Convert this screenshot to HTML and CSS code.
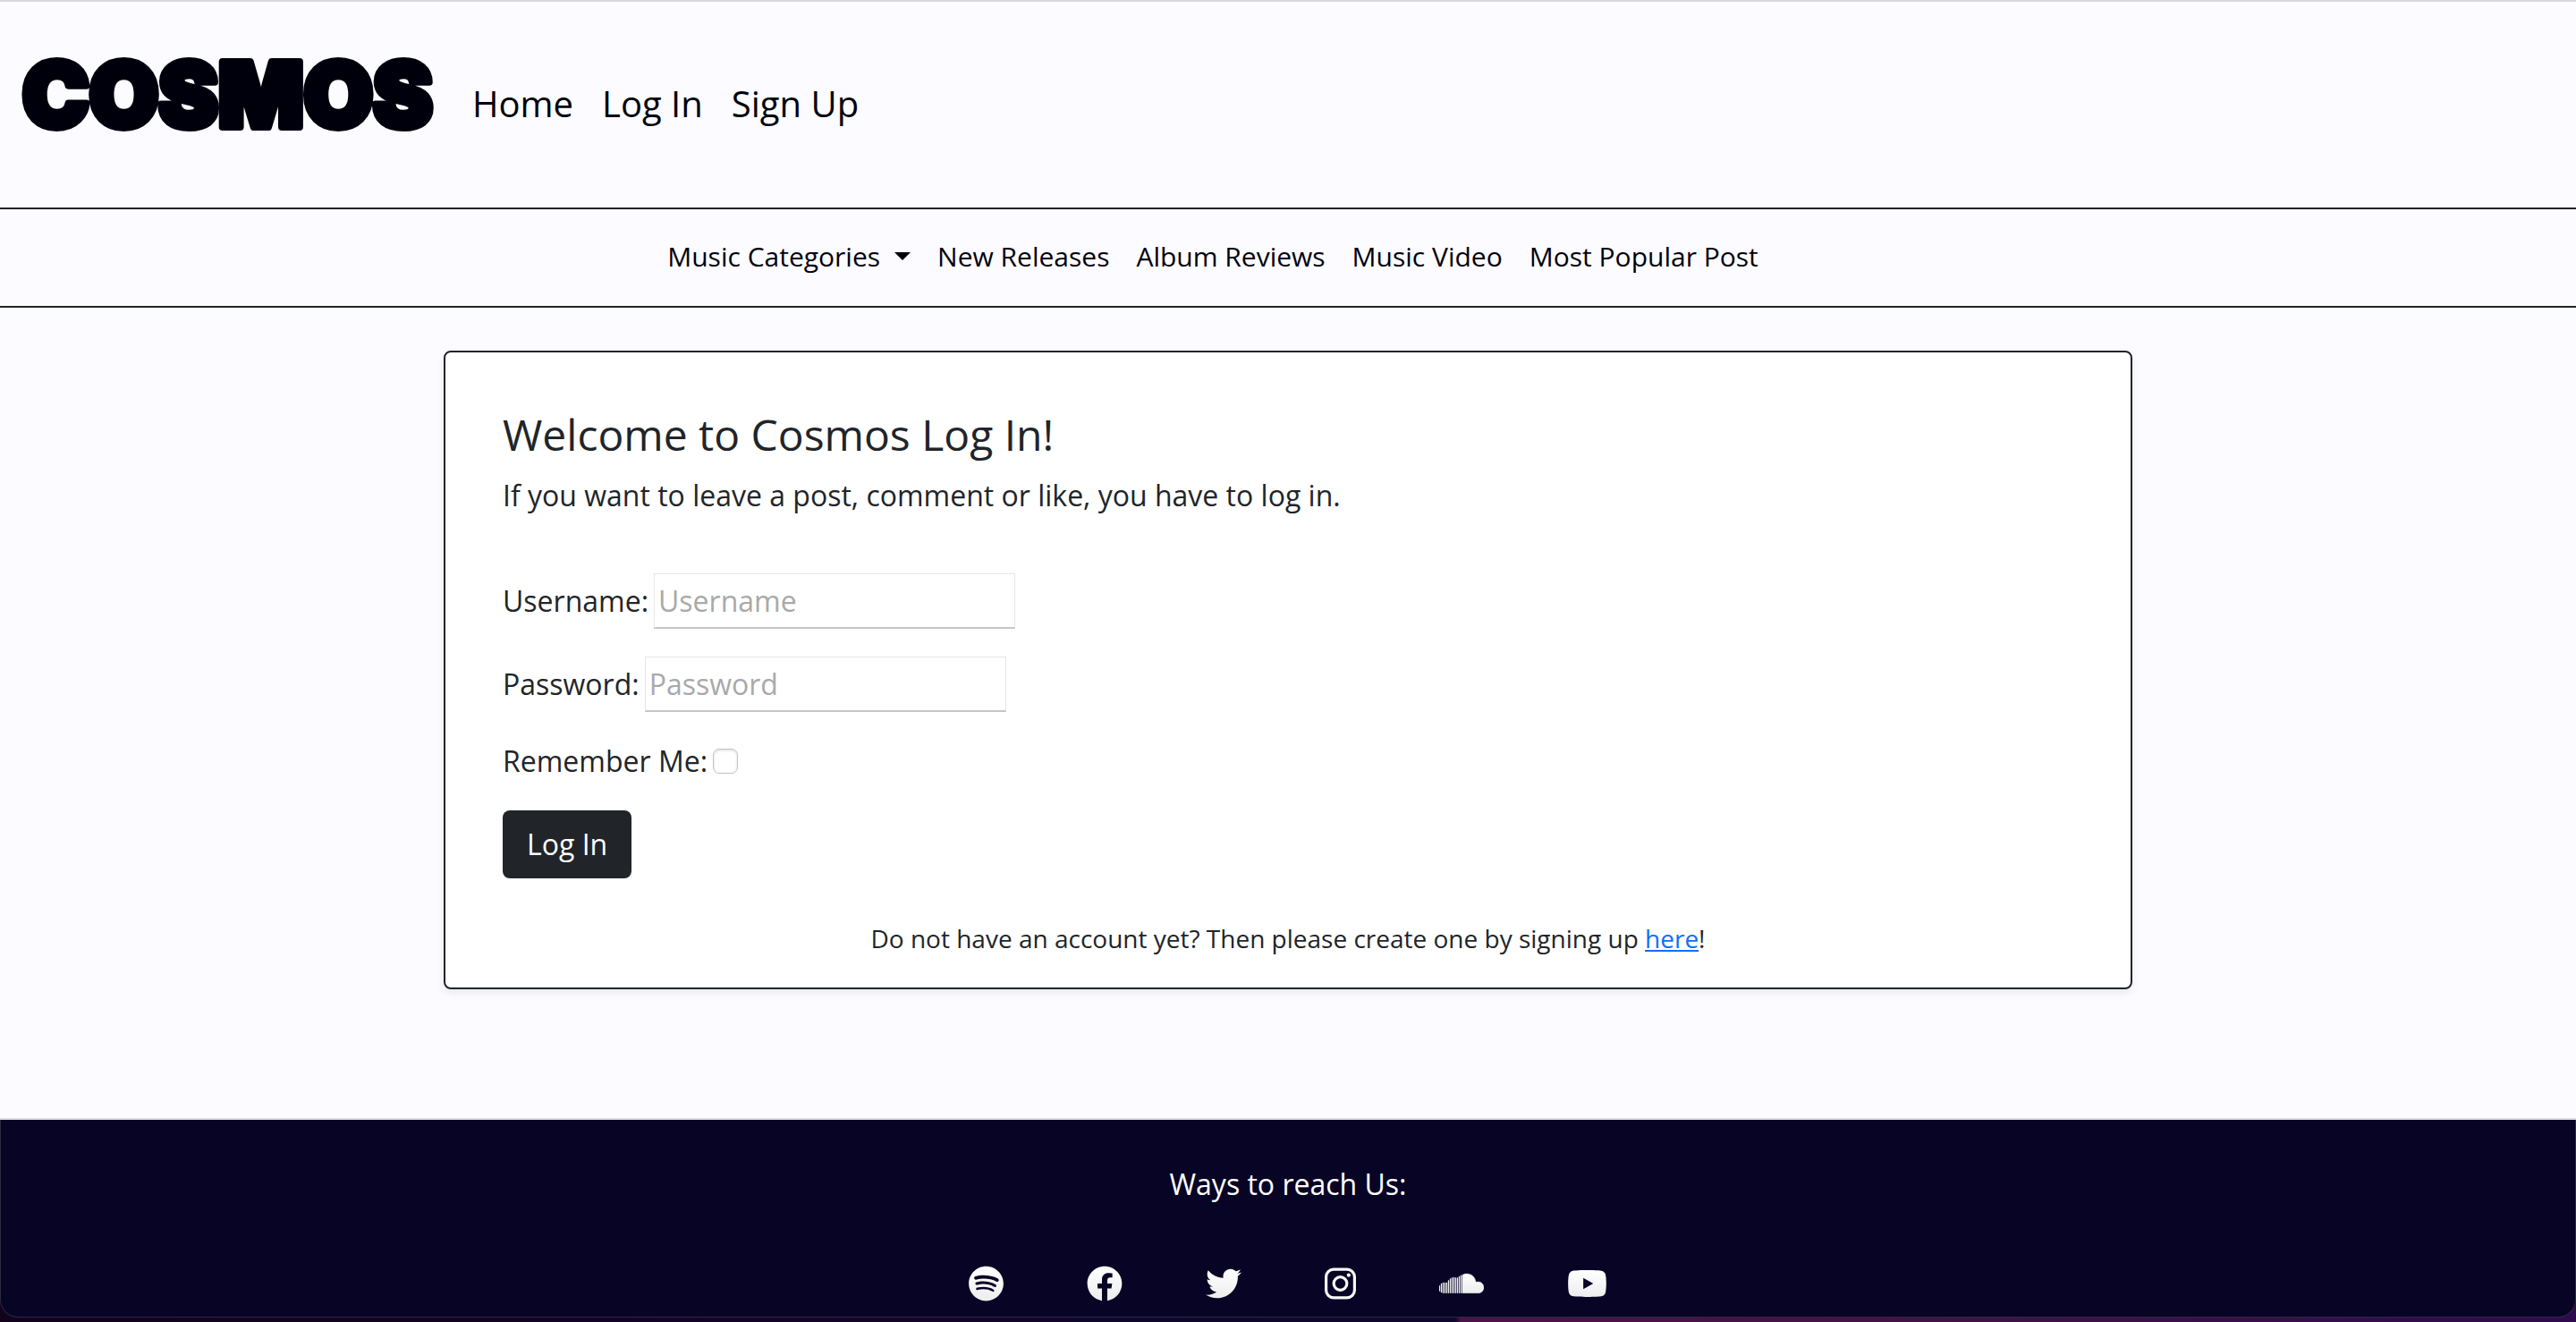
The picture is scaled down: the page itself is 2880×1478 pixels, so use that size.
FILE: index.html
```html
<!DOCTYPE html>
<html lang="en">
<head>
<meta charset="utf-8">
<meta name="viewport" content="width=device-width, initial-scale=1">
<title>Cosmos</title>
<link rel="stylesheet" href="styles.css">
</head>
<body>
<header class="site-header">
  <a class="brand" href="#" aria-label="Cosmos home">
    <svg class="brand-logo" viewBox="0 0 460 116" width="460" height="116">
      <text class="brand-text" x="1" y="86">COSMOS</text>
    </svg>
  </a>
  <nav class="main-nav">
    <a href="#">Home</a>
    <a href="#">Log In</a>
    <a href="#">Sign Up</a>
  </nav>
</header>

<nav class="category-nav">
  <button class="dropdown-toggle" type="button">Music Categories</button>
  <a href="#">New Releases</a>
  <a href="#">Album Reviews</a>
  <a href="#">Music Video</a>
  <a href="#">Most Popular Post</a>
</nav>

<main class="content">
  <section class="card">
    <h1 class="card-title">Welcome to Cosmos Log In!</h1>
    <p class="card-lead">If you want to leave a post, comment or like, you have to log in.</p>
    <form class="login-form">
      <div class="field">
        <label for="username">Username:</label>
        <input class="text-input" id="username" type="text" placeholder="Username">
      </div>
      <div class="field">
        <label for="password">Password:</label>
        <input class="text-input" id="password" type="password" placeholder="Password">
      </div>
      <div class="field">
        <label for="remember">Remember Me:</label>
        <input class="check-input" id="remember" type="checkbox">
      </div>
      <button class="submit" type="submit">Log In</button>
    </form>
    <p class="signup-note">Do not have an account yet? Then please create one by signing up <a href="#">here</a>!</p>
  </section>
</main>

<div class="footer-wrap">
  <footer class="site-footer">
    <p class="footer-title">Ways to reach Us:</p>
    <div class="social">
      <a href="#" aria-label="Spotify">
        <svg viewBox="0 0 496 512" width="39" height="40">
          <defs><linearGradient id="shade" x1="0" y1="0" x2="0" y2="1"><stop offset="0" stop-color="#fff"/><stop offset="1" stop-color="#ededed"/></linearGradient></defs>
          <path d="M248 8C111.1 8 0 119.1 0 256s111.1 248 248 248 248-111.1 248-248S384.9 8 248 8zm100.7 364.9c-4.2 0-6.8-1.3-10.7-3.6-62.4-37.6-135-39.2-206.7-24.5-3.9 1-9 2.6-11.9 2.6-9.7 0-15.8-7.7-15.8-15.8 0-10.3 6.1-15.2 13.6-16.8 81.9-18.1 165.6-16.5 237 26.2 6.1 3.9 9.7 7.4 9.7 16.5s-7.1 15.4-15.2 15.4zm26.9-65.6c-5.2 0-8.7-2.3-12.3-4.2-62.5-37-155.7-51.9-238.6-29.4-4.8 1.3-7.4 2.6-11.9 2.6-10.7 0-19.4-8.7-19.4-19.4s5.2-17.8 15.5-20.7c27.8-7.8 56.2-13.6 97.8-13.6 64.9 0 127.6 16.1 177 45.5 8.1 4.8 11.3 11 11.3 19.7-.1 10.8-8.5 19.5-19.4 19.5zm31-76.2c-5.2 0-8.4-1.3-12.9-3.9-71.2-42.5-198.5-52.7-280.9-29.7-3.6 1-8.1 2.6-12.9 2.6-13.2 0-23.3-10.3-23.3-23.6 0-13.6 8.4-21.3 17.4-23.9 35.2-10.3 74.6-15.2 117.5-15.2 73 0 149.5 15.2 205.4 47.8 7.8 4.5 12.9 10.7 12.9 22.6 0 13.6-11 23.3-23.2 23.3z"/>
        </svg>
      </a>
      <a href="#" aria-label="Facebook">
        <svg viewBox="0 0 512 512" width="40" height="40"><path d="M504 256C504 119 393 8 256 8S8 119 8 256c0 123.78 90.69 226.38 209.25 245V327.69h-63V256h63v-54.64c0-62.15 37-96.48 93.67-96.48 27.14 0 55.52 4.84 55.52 4.84v61h-31.28c-30.8 0-40.41 19.12-40.41 38.73V256h68.78l-11 71.69h-57.78V501C413.31 482.38 504 379.78 504 256z"/></svg>
      </a>
      <a href="#" aria-label="Twitter">
        <svg viewBox="0 0 512 512" width="40" height="40"><path d="M459.37 151.716c.325 4.548.325 9.097.325 13.645 0 138.72-105.583 298.558-298.558 298.558-59.452 0-114.68-17.219-161.137-47.106 8.447.974 16.568 1.299 25.34 1.299 49.055 0 94.213-16.568 130.274-44.832-46.132-.975-84.792-31.188-98.112-72.772 6.498.974 12.995 1.624 19.818 1.624 9.421 0 18.843-1.3 27.614-3.573-48.081-9.747-84.143-51.98-84.143-102.985v-1.299c13.969 7.797 30.214 12.67 47.431 13.319-28.264-18.843-46.781-51.005-46.781-87.391 0-19.492 5.197-37.36 14.294-52.954 51.655 63.675 129.3 105.258 216.365 109.807-1.624-7.797-2.599-15.918-2.599-24.04 0-57.828 46.782-104.934 104.934-104.934 30.213 0 57.502 12.67 76.67 33.137 23.715-4.548 46.456-13.32 66.599-25.34-7.798 24.366-24.366 44.833-46.132 57.827 21.117-2.273 41.584-8.122 60.426-16.243-14.292 20.791-32.161 39.308-52.628 54.253z"/></svg>
      </a>
      <a href="#" aria-label="Instagram">
        <svg viewBox="0 0 448 512" width="35" height="40">
          <g fill="none" stroke="#f7f7f7" stroke-width="41"><rect x="20.500" y="52.500" width="407" height="407" rx="108"/><circle cx="224" cy="256" r="94"/></g>
          <circle cx="343.500" cy="136.500" r="27"/>
        </svg>
      </a>
      <a href="#" aria-label="SoundCloud">
        <svg viewBox="0 0 50 40" width="50" height="40">
          <path stroke="#f4f4f4" stroke-width=".3" d="M0 22.500h1v6H0zM2 20h1v10H2zM4 19h1v11.700H4zM6 19h1v11.700H6zM8 19h1v11.700H8zM10 16.500h1v14.200h-1zM12 14.500h1v16.200h-1zM14 13.500h1v17.200h-1zM16 13h1v17.700h-1zM18 13.500h1v17.200h-1zM20 13.500h1v17.200h-1zM22 12h1v18.700h-1zM24 10.800h1.200v19.900H24zM26 10.200C27.500 9.400 29 9 30.800 9c5.500 0 9.700 4 10.300 9.400.8-.3 1.700-.4 2.600-.4 3.500 0 6.300 2.900 6.300 6.400s-2.800 6.300-6.300 6.300H26z"/>
        </svg>
      </a>
      <a href="#" aria-label="YouTube">
        <svg viewBox="0 0 576 512" width="45" height="40"><path d="M549.655 124.083c-6.281-23.650-24.787-42.276-48.284-48.597C458.781 64 288 64 288 64S117.220 64 74.629 75.486c-23.497 6.322-42.003 24.947-48.284 48.597-11.412 42.867-11.412 132.305-11.412 132.305s0 89.438 11.412 132.305c6.281 23.650 24.787 41.500 48.284 47.821C117.220 448 288 448 288 448s170.780 0 213.371-11.486c23.497-6.321 42.003-24.171 48.284-47.821 11.412-42.867 11.412-132.305 11.412-132.305s0-89.438-11.412-132.305zm-317.510 213.508V175.185l142.739 81.205-142.739 81.201z"/></svg>
      </a>
    </div>
  </footer>
</div>
</body>
</html>
```
FILE: styles.css
```css
*, *::before, *::after { box-sizing: border-box; }

body {
  margin: 0;
  border-top: 2px solid #d8d8de;
  background: #fcfbff;
  color: #212529;
  font-family: "Open Sans", "Noto Sans", sans-serif;
  font-size: 32px;
  line-height: 48px;
}

h1, p { margin: 0; font-weight: 400; }

input, button { font: inherit; color: inherit; }

/* Header */
.site-header {
  display: flex;
  align-items: center;
  gap: 44px;
  padding: 54px 24px 60px;
  border-bottom: 2px solid #212529;
}

.brand-logo { display: block; overflow: visible; }

.brand-text {
  font-family: Inter, sans-serif;
  font-size: 100px;
  font-weight: 900;
  fill: #00000c;
  stroke: #00000c;
  stroke-width: 8px;
  stroke-linejoin: round;
}

.main-nav {
  display: flex;
  gap: 32px;
  padding-top: 4px;
  font-size: 40px;
  line-height: 60px;
}

.main-nav a,
.category-nav a,
.dropdown-toggle { color: #00000c; text-decoration: none; }

/* Category bar */
.category-nav {
  display: flex;
  justify-content: center;
  gap: 30px;
  padding: 30px 168px 33px 0;
  border-bottom: 2px solid #212529;
  font-size: 30px;
  line-height: 45px;
}

.dropdown-toggle {
  display: flex;
  align-items: center;
  gap: 16px;
  padding: 0;
  border: 0;
  background: none;
}

.dropdown-toggle::after {
  content: "";
  border: 9px solid transparent;
  border-top-color: #00000c;
  border-bottom: 0;
}

/* Login card */
.content {
  width: calc(100% * 2 / 3);
  margin: 0 auto;
  padding: 48px 16px 144px;
}

.card {
  padding: 64px 64px 34px;
  border: 2px solid #212529;
  border-radius: 8px;
  background: #fff;
  box-shadow: 0 4px 8px rgba(0, 0, 0, 0.08);
}

.card-title { margin-bottom: 16px; font-size: 48px; line-height: 56px; }

.login-form {
  display: flex;
  flex-direction: column;
  align-items: flex-start;
  gap: 31px;
  margin: 63px 0 46px;
}

.field { display: flex; align-items: center; gap: 6px; }

.text-input {
  width: 404px;
  height: 62px;
  padding: 0 4px;
  border: 1px solid #e6e6e6;
  border-bottom: 2px solid #c6c6c6;
  background: #fff;
}

.text-input::placeholder { color: #a9a9a9; opacity: 1; }

.check-input {
  appearance: none;
  width: 28px;
  height: 28px;
  margin: 0;
  border: 1px solid #c3c3c3;
  border-radius: 7px;
  background: #fff;
  box-shadow: inset 0 1px 3px rgba(0, 0, 0, 0.15);
}

.submit {
  padding: 14px 27px;
  border: 0;
  border-radius: 8px;
  background: #212529;
  color: #fff;
}

.signup-note { font-size: 28px; line-height: 42px; text-align: center; }

.signup-note a { color: #0d6efd; }

/* Footer */
.footer-wrap {
  padding-bottom: 5px;
  border-top: 2px solid #dcdbe3;
  background: linear-gradient(90deg, #12021c, #120630 56.500%, #4a1449 56.700%, #431246 75%, #2e0a4e);
}

.site-footer {
  display: flex;
  flex-direction: column;
  align-items: center;
  gap: 67px;
  padding: 48px 0 17px;
  border: 1px solid #2b2a3e;
  border-top: 0;
  border-radius: 0 0 20px 20px;
  background: #080425;
  color: #fff;
}

.social { display: flex; gap: 93px; }

.social svg { display: block; fill: url(#shade); }
```
